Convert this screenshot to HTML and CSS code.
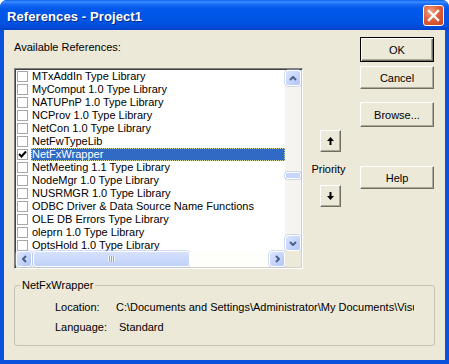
FILE: index.html
```html
<!DOCTYPE html>
<html lang="en">
<head>
    <meta charset="UTF-8">
    <title>References - Project1</title>
    <link rel="stylesheet" href="styles.css">
</head>
<body>
    <div class="window">
        <!-- Title Bar -->
        <div class="titlebar">
            <span class="title">References - Project1</span>
            <div class="close-btn">
                <svg width="13" height="13" viewBox="0 0 13 13">
                    <path d="M2 2 L11 11 M11 2 L2 11" stroke="#fff" stroke-width="2.4" stroke-linecap="square"/>
                </svg>
            </div>
        </div>

        <!-- Client Area -->
        <div class="client">
            <div class="top-row">
                <div class="left-col">
                    <div class="label">Available References:</div>
                    <div class="listbox">
                        <div class="list-main">
                            <div class="rows">
                                <div class="row"><span class="check"></span><span class="item">MTxAddIn Type Library</span></div>
                                <div class="row"><span class="check"></span><span class="item">MyComput 1.0 Type Library</span></div>
                                <div class="row"><span class="check"></span><span class="item">NATUPnP 1.0 Type Library</span></div>
                                <div class="row"><span class="check"></span><span class="item">NCProv 1.0 Type Library</span></div>
                                <div class="row"><span class="check"></span><span class="item">NetCon 1.0 Type Library</span></div>
                                <div class="row"><span class="check"></span><span class="item">NetFwTypeLib</span></div>
                                <div class="row selected">
                                    <span class="check">
                                        <svg width="9" height="9" viewBox="0 0 9 9"><path d="M1 4 L3.5 6.5 L8 1.5" fill="none" stroke="#000" stroke-width="2"/></svg>
                                    </span>
                                    <span class="item">NetFxWrapper</span>
                                </div>
                                <div class="row"><span class="check"></span><span class="item">NetMeeting 1.1 Type Library</span></div>
                                <div class="row"><span class="check"></span><span class="item">NodeMgr 1.0 Type Library</span></div>
                                <div class="row"><span class="check"></span><span class="item">NUSRMGR 1.0 Type Library</span></div>
                                <div class="row"><span class="check"></span><span class="item">ODBC Driver &amp; Data Source Name Functions</span></div>
                                <div class="row"><span class="check"></span><span class="item">OLE DB Errors Type Library</span></div>
                                <div class="row"><span class="check"></span><span class="item">oleprn 1.0 Type Library</span></div>
                                <div class="row"><span class="check"></span><span class="item">OptsHold 1.0 Type Library</span></div>
                            </div>
                            <!-- Vertical Scrollbar -->
                            <div class="vscroll">
                                <div class="sb-btn">
                                    <svg width="8" height="5" viewBox="0 0 8 5"><path d="M1 4 L4 1 L7 4" fill="none" stroke="#4d6185" stroke-width="2"/></svg>
                                </div>
                                <div class="vtrack-a"></div>
                                <div class="vthumb"></div>
                                <div class="vtrack-b"></div>
                                <div class="sb-btn">
                                    <svg width="8" height="5" viewBox="0 0 8 5"><path d="M1 1 L4 4 L7 1" fill="none" stroke="#4d6185" stroke-width="2"/></svg>
                                </div>
                            </div>
                        </div>
                        <!-- Horizontal Scrollbar -->
                        <div class="hscroll">
                            <div class="sb-btn">
                                <svg width="5" height="8" viewBox="0 0 5 8"><path d="M4 1 L1 4 L4 7" fill="none" stroke="#4d6185" stroke-width="2"/></svg>
                            </div>
                            <div class="hthumb"><span class="grip"></span></div>
                            <div class="htrack"></div>
                            <div class="sb-btn">
                                <svg width="5" height="8" viewBox="0 0 5 8"><path d="M1 1 L4 4 L1 7" fill="none" stroke="#4d6185" stroke-width="2"/></svg>
                            </div>
                            <div class="corner"></div>
                        </div>
                    </div>
                </div>

                <!-- Priority -->
                <div class="priority-col">
                    <div class="arrow-btn">
                        <svg width="7" height="8" viewBox="0 0 7 8"><path d="M3.5 0 L7 4 L4.5 4 L4.5 8 L2.5 8 L2.5 4 L0 4 Z" fill="#000"/></svg>
                    </div>
                    <div class="priority-label">Priority</div>
                    <div class="arrow-btn">
                        <svg width="7" height="8" viewBox="0 0 7 8"><path d="M3.5 8 L7 4 L4.5 4 L4.5 0 L2.5 0 L2.5 4 L0 4 Z" fill="#000"/></svg>
                    </div>
                </div>

                <!-- Buttons -->
                <div class="btn-col">
                    <div class="btn default">OK</div>
                    <div class="btn cancel">Cancel</div>
                    <div class="btn browse">Browse...</div>
                    <div class="btn help">Help</div>
                </div>
            </div>

            <!-- Details -->
            <fieldset class="details">
                <legend>NetFxWrapper</legend>
                <div class="detail-row">
                    <span class="detail-label">Location:</span>
                    <span class="detail-value path">C:\Documents and Settings\Administrator\My Documents\Visual Studio Projects\NetFxWrapper.tlb</span>
                </div>
                <div class="detail-row lang">
                    <span class="detail-label">Language:</span>
                    <span class="detail-value std">Standard</span>
                </div>
            </fieldset>
        </div>
    </div>
</body>
</html>
```

FILE: styles.css
```css
/* ====== Base ====== */
body {
    margin: 0;
    background: #fff;
    font-family: 'Liberation Sans', Arial, sans-serif;
    font-size: 11px;
    color: #000;
}
.window {
    width: 449px;
    height: 364px;
    display: flex;
    flex-direction: column;
    border-radius: 7px 7px 0 0;
    overflow: hidden;
    background: #0a52dc;
}

/* ====== Title Bar ====== */
.titlebar {
    height: 30px;
    flex: none;
    display: flex;
    align-items: center;
    justify-content: space-between;
    padding: 0 5px 0 7px;
    background: linear-gradient(to bottom, #0a61f0 0, #3d8eff 2px, #1a6cf8 4px, #0058ea 9px, #0054e3 22px, #0049d6 28px, #003fc4 30px);
}
.title {
    color: #fff;
    font-weight: bold;
    font-size: 13px;
    letter-spacing: 0.1px;
    text-shadow: 1px 1px 0 #0a2a80;
    margin-top: 2px;
}
.close-btn {
    width: 21px;
    height: 21px;
    box-sizing: border-box;
    border: 1px solid #fff;
    border-radius: 3px;
    background: radial-gradient(circle at 35% 30%, #f0a080 0, #e2603c 45%, #c8401c 100%);
    display: flex;
    align-items: center;
    justify-content: center;
    margin-top: 1px;
}

/* ====== Client ====== */
.client {
    flex: 1;
    margin: 0 4px 4px 4px;
    background: #ece9d8;
    padding: 7px 11px 0 10px;
}
.top-row {
    display: flex;
}
.left-col {
    width: 289px;
}
.label {
    line-height: 13px;
    margin-top: 4px;
}

/* ====== List Box ====== */
.listbox {
    margin-top: 14px;
    height: 201px;
    box-sizing: border-box;
    border: 1px solid;
    border-color: #808080 #fff #fff #808080;
    box-shadow: inset 1px 1px 0 #404040, inset -1px -1px 0 #d4d0c8;
    padding: 1px;
    background: #fff;
    display: flex;
    flex-direction: column;
}
.list-main {
    display: flex;
    height: 181px;
}
.rows {
    flex: 1;
    overflow: hidden;
}
.row {
    display: flex;
    align-items: center;
    height: 13px;
    line-height: 13px;
    white-space: nowrap;
}
.check {
    width: 11px;
    height: 11px;
    box-sizing: border-box;
    border: 1px solid #a7a6aa;
    background: #fff;
    margin: 0 3px 0 1px;
    flex: none;
    display: flex;
    align-items: center;
    justify-content: center;
}
.item {
    padding-left: 1px;
}
.row.selected .item {
    flex: 1;
    height: 13px;
    box-sizing: border-box;
    background: #316ac5;
    color: #fff;
    border: 1px dotted #d8dc9c;
    line-height: 11px;
    padding-left: 0;
}

/* ====== Scrollbars ====== */
.vscroll {
    width: 16px;
    display: flex;
    flex-direction: column;
    background: #f5f4ee;
}
.sb-btn {
    width: 16px;
    height: 16px;
    box-sizing: border-box;
    flex: none;
    border: 1px solid #fff;
    border-radius: 3px;
    background: linear-gradient(135deg, #dbe5fd 0%, #c2d3fb 60%, #b2c5f5 100%);
    box-shadow: 0 0 0 0.5px #a8b9e6;
    display: flex;
    align-items: center;
    justify-content: center;
}
.vtrack-a {
    height: 86px;
}
.vthumb {
    height: 7px;
    box-sizing: border-box;
    border: 1px solid #fff;
    border-radius: 2px;
    background: #c6d5fb;
    box-shadow: 0 0 0 0.5px #a8b9e6;
}
.vtrack-b {
    flex: 1;
}
.hscroll {
    display: flex;
    height: 16px;
    background: #f9f8f4;
}
.hthumb {
    width: 157px;
    box-sizing: border-box;
    border: 1px solid #fff;
    border-radius: 3px;
    background: linear-gradient(to bottom, #d6e1fc, #c0d1fa);
    box-shadow: 0 0 0 0.5px #a8b9e6;
    display: flex;
    align-items: center;
    justify-content: center;
    margin-left: 1px;
}
.grip {
    width: 7px;
    height: 6px;
    background: repeating-linear-gradient(to right, #eef3fe 0 1px, #8da6e0 1px 2px);
}
.htrack {
    flex: 1;
    background: #fefefb;
}
.corner {
    width: 16px;
    flex: none;
    background: #ece9d8;
}

/* ====== Priority ====== */
.priority-col {
    width: 34px;
    margin-left: 10px;
    padding-top: 93px;
    display: flex;
    flex-direction: column;
    align-items: center;
}
.arrow-btn {
    width: 21px;
    height: 22px;
    box-sizing: border-box;
    border: 1px solid;
    border-color: #fff #716f64 #716f64 #fff;
    box-shadow: inset -1px -1px 0 #aca899;
    display: flex;
    align-items: center;
    justify-content: center;
    margin-left: 1px;
}
.priority-label {
    line-height: 13px;
    margin: 11px 0 9px;
    margin-left: -3px;
}

/* ====== Buttons ====== */
.btn-col {
    width: 74px;
    margin-left: 13px;
    display: flex;
    flex-direction: column;
}
.btn {
    height: 23px;
    box-sizing: border-box;
    border: 1px solid;
    border-color: #fff #716f64 #716f64 #fff;
    box-shadow: inset -1px -1px 0 #aca899;
    display: flex;
    align-items: center;
    justify-content: center;
}
.btn.default {
    height: 25px;
    border: 1px solid #000;
    box-shadow: inset 1px 1px 0 #fff, inset -1px -1px 0 #716f64, inset -2px -2px 0 #aca899;
}
.btn.cancel {
    margin-top: 4px;
}
.btn.browse {
    margin-top: 13px;
    height: 25px;
}
.btn.help {
    margin-top: 39px;
}

/* ====== Details Group ====== */
.details {
    margin: 10px 0 0 0;
    width: 421px;
    box-sizing: border-box;
    border: 1px solid #c5c3b3;
    border-radius: 3px;
    padding: 9px 0 11px 0;
}
.details legend {
    padding: 0 2px;
    margin-left: 5px;
    line-height: 13px;
}
.detail-row {
    display: flex;
    line-height: 13px;
    white-space: nowrap;
    padding-left: 40px;
}
.detail-row.lang {
    margin-top: 7px;
}
.detail-label {
    width: 61px;
    flex: none;
}
.detail-value.path {
    width: 298px;
    overflow: hidden;
}
.detail-value.std {
    padding-left: 3px;
}
```
